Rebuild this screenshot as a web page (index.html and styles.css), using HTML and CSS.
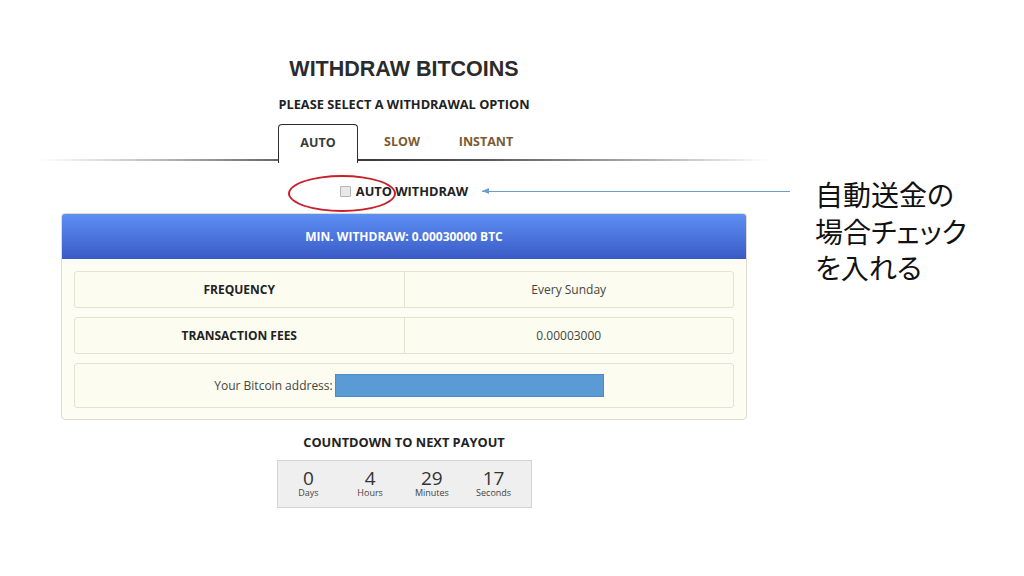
FILE: index.html
```html
<!DOCTYPE html>
<html lang="ja">
<head>
<meta charset="utf-8">
<title>Withdraw Bitcoins</title>
<link rel="stylesheet" href="styles.css">
</head>
<body>
<div class="page">
  <div class="main">
    <h1 class="title">WITHDRAW BITCOINS</h1>
    <div class="subtitle">PLEASE SELECT A WITHDRAWAL OPTION</div>
    <div class="tabbar">
      <div class="tab tab-active">AUTO</div>
      <div class="tab">SLOW</div>
      <div class="tab">INSTANT</div>
    </div>
    <div class="auto-row">
      <span class="checkbox"></span>
      <span class="auto-label">AUTO WITHDRAW</span>
    </div>
    <div class="panel">
      <div class="panel-head">MIN. WITHDRAW: 0.00030000 BTC</div>
      <div class="panel-body">
        <div class="row">
          <div class="cell cell-label">FREQUENCY</div>
          <div class="cell cell-value">Every Sunday</div>
        </div>
        <div class="row">
          <div class="cell cell-label">TRANSACTION FEES</div>
          <div class="cell cell-value">0.00003000</div>
        </div>
        <div class="row row-address">
          <span class="address-label">Your Bitcoin address:</span>
          <span class="address-input"></span>
        </div>
      </div>
    </div>
    <div class="countdown-title">COUNTDOWN TO NEXT PAYOUT</div>
    <div class="countdown">
      <div class="unit"><div class="num">0</div><div class="lbl">Days</div></div>
      <div class="unit"><div class="num">4</div><div class="lbl">Hours</div></div>
      <div class="unit"><div class="num">29</div><div class="lbl">Minutes</div></div>
      <div class="unit"><div class="num">17</div><div class="lbl">Seconds</div></div>
    </div>
  </div>
  <div class="note">自動送金の<br>場合チェック<br>を入れる</div>
  <div class="ellipse"></div>
  <div class="arrow"></div>
</div>
</body>
</html>
```
FILE: styles.css
```css
html, body {
  margin: 0;
  padding: 0;
  background: #ffffff;
}
body {
  font-family: "Open Sans", "Noto Sans", sans-serif;
  color: #333333;
}
.page {
  position: relative;
  width: 1024px;
  height: 576px;
  display: flex;
  align-items: flex-start;
}
.main {
  width: 686px;
  margin-left: 61px;
  padding-top: 57px;
  display: flex;
  flex-direction: column;
  align-items: center;
}
.title {
  margin: 0;
  font-family: "Liberation Sans", Arial, sans-serif;
  font-weight: bold;
  font-size: 21.5px;
  line-height: 24px;
  color: #2b2b2b;
}
.subtitle {
  margin-top: 15px;
  font-size: 12.8px;
  line-height: 16px;
  font-weight: bold;
  color: #222222;
}
.tabbar {
  position: relative;
  margin-top: 12px;
  width: 730px;
  box-sizing: border-box;
  padding-right: 4px;
  display: flex;
  justify-content: center;
}
.tabbar::after {
  content: "";
  position: absolute;
  left: 0;
  right: 0;
  bottom: 0;
  height: 2px;
  background: linear-gradient(to right, rgba(255,255,255,0) 0%, #d0d0d0 12%, #6a6a6a 32%, #3a3a3a 44%, #555555 60%, #b5b5b5 85%, rgba(255,255,255,0) 100%);
}
.tab {
  width: 80px;
  height: 37px;
  margin: 0 2px;
  box-sizing: border-box;
  display: flex;
  align-items: center;
  justify-content: center;
  font-size: 12.5px;
  font-weight: bold;
  color: #7a5c30;
  padding-bottom: 2px;
}
.tab-active {
  position: relative;
  z-index: 1;
  background: #ffffff;
  border: 1.5px solid #2e2e2e;
  border-bottom: none;
  border-radius: 4px 4px 0 0;
  height: 39px;
  margin-bottom: -2px;
  padding-bottom: 3px;
  color: #3a3a3a;
}
.auto-row {
  margin-top: 22px;
  height: 16px;
  display: flex;
  align-items: center;
  gap: 5px;
}
.checkbox {
  width: 9px;
  height: 9px;
  border: 1px solid #b5b5b5;
  background: #e8e8e8;
  border-radius: 1px;
}
.auto-label {
  font-size: 12.8px;
  font-weight: bold;
  color: #222222;
  line-height: 16px;
}
.panel {
  margin-top: 14px;
  width: 686px;
  box-sizing: border-box;
  border: 1px solid #dcdccc;
  border-radius: 4px;
  background: #fdfdf4;
  overflow: hidden;
}
.panel-head {
  height: 45px;
  display: flex;
  align-items: center;
  justify-content: center;
  background: linear-gradient(to bottom, #5d90f3, #3a5ac6);
  color: #ffffff;
  font-size: 12px;
  font-weight: bold;
}
.panel-body {
  padding: 12px 12px 11px;
  display: flex;
  flex-direction: column;
  gap: 9px;
}
.row {
  height: 37px;
  box-sizing: border-box;
  border: 1px solid #e3e3d2;
  border-radius: 3px;
  background: #fcfcf0;
  display: flex;
}
.cell {
  flex: 1;
  display: flex;
  align-items: center;
  justify-content: center;
  font-size: 12px;
}
.cell-label {
  font-weight: bold;
  color: #222222;
  border-right: 1px solid #e3e3d2;
}
.cell-value {
  color: #444444;
}
.row-address {
  height: 45px;
  align-items: center;
  justify-content: center;
  padding-left: 10px;
}
.address-label {
  font-size: 12px;
  color: #444444;
  margin-right: 2px;
}
.address-input {
  width: 269px;
  height: 23px;
  box-sizing: border-box;
  background: #5b9bd5;
  border: 1px solid #4d8cc6;
}
.countdown-title {
  margin-top: 14px;
  font-size: 12.8px;
  line-height: 16px;
  font-weight: bold;
  color: #222222;
}
.countdown {
  margin-top: 10px;
  width: 255px;
  height: 48px;
  box-sizing: border-box;
  border: 1px solid #d3d3d3;
  background: #efefef;
  display: flex;
  padding: 8px 6px 0 0;
}
.unit {
  width: 62px;
  display: flex;
  flex-direction: column;
  align-items: center;
}
.num {
  font-size: 19px;
  line-height: 19px;
  color: #333333;
}
.lbl {
  font-size: 9px;
  line-height: 10px;
  color: #444444;
}
.note {
  margin-left: 68px;
  margin-top: 176px;
  font-family: "Noto Sans CJK JP", sans-serif;
  font-feature-settings: "palt";
  font-size: 28px;
  line-height: 36.5px;
  color: #111111;
}
.ellipse {
  position: absolute;
  left: 288px;
  top: 175px;
  width: 108px;
  height: 37px;
  box-sizing: border-box;
  border: 2px solid #c8202a;
  border-radius: 50%;
}
.arrow {
  position: absolute;
  left: 482px;
  top: 191px;
  width: 308px;
  height: 1px;
  background: #6c9ccf;
}
.arrow::before {
  content: "";
  position: absolute;
  left: 0;
  top: -3px;
  border-right: 7px solid #6c9ccf;
  border-top: 3.5px solid transparent;
  border-bottom: 3.5px solid transparent;
}
```
